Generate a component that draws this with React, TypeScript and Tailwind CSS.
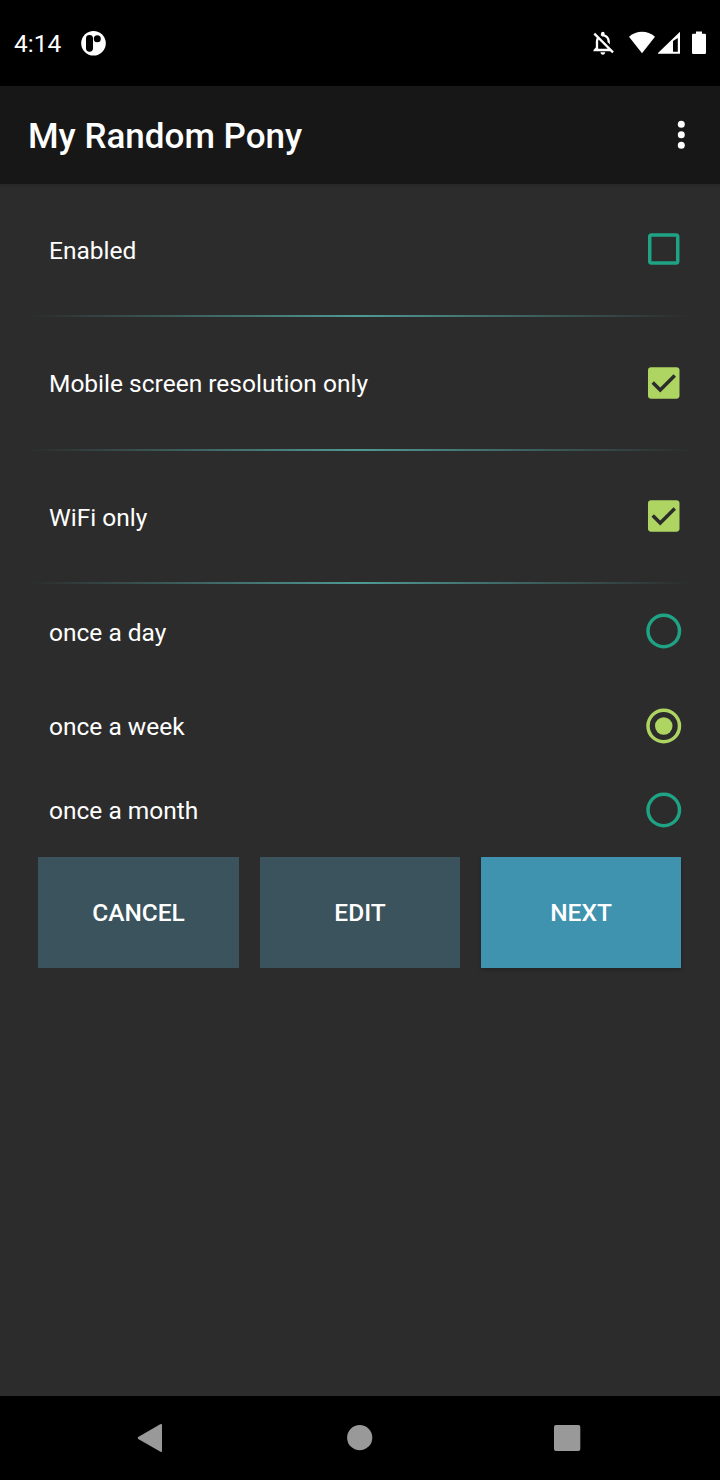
import React from "react";

function StatusBar() {
  return (
    <div className="flex h-[86px] shrink-0 items-center bg-black pl-[14px] text-white">
      <span className="w-[48px] pt-[2px] text-[24.5px] leading-[28px] whitespace-nowrap">4:14</span>
      <svg className="ml-[19px] h-[25px] w-[25px]" viewBox="0 0 25 25">
        <circle cx="12.5" cy="12.3" r="12.3" fill="#fff" />
        <rect x="5" y="4" width="7" height="16.7" rx="3.4" fill="#000" />
        <circle cx="16.3" cy="7.7" r="3.5" fill="#000" />
      </svg>
      <svg className="ml-auto h-[24px] w-[24px]" viewBox="0 0 24 24" fill="#fff">
        <path
          transform="translate(-2.2 -2.1) scale(1.17)"
          d="M12 22c1.1 0 2-.9 2-2h-4c0 1.1.9 2 2 2zm0-15.5c2.49 0 4 2.02 4 4.5v.1l2 2V11c0-3.07-1.63-5.64-4.5-6.32V4c0-.83-.67-1.5-1.5-1.5s-1.5.67-1.5 1.5v.68c-.24.06-.47.15-.69.23l1.64 1.64c.18-.02.36-.05.55-.05zM5.41 3.35L4 4.76l2.81 2.81C6.29 8.57 6 9.74 6 11v5l-2 2v1h14.24l1.74 1.74 1.41-1.41L5.41 3.35zM16 17H8v-6c0-.68.12-1.32.34-1.9L16 16.76V17z"
        />
      </svg>
      <svg className="ml-[14px] h-[24px] w-[26px]" viewBox="0 0 26 24" fill="#fff">
        <path d="M0 5.8C7.5-.9 18.5-.9 26 5.8L13 22.2Z" />
      </svg>
      <svg className="ml-[3px] h-[24px] w-[23px]" viewBox="0 0 23 24">
        <path fillRule="evenodd" d="M-.6 23 22 1V23ZM15 10.4V21H19.8V7.2Z" fill="#fff" transform="translate(0 -.3)" />
      </svg>
      <svg className="mr-[14px] ml-[11px] h-[24px] w-[14px]" viewBox="0 0 14 24" fill="#fff">
        <path d="M4 .5H10V2.7H12.8Q14 2.7 14 3.9V21.8Q14 23 12.8 23H1.2Q0 23 0 21.8V3.9Q0 2.7 1.2 2.7H4Z" />
      </svg>
    </div>
  );
}

function Checkbox({ checked }: { checked: boolean }) {
  return (
    <svg className="mb-[1px] h-[42px] w-[42px]" viewBox="0.15 0 24 24">
      {checked ? (
        <>
          <rect x="3" y="3" width="18" height="18" rx="1.8" fill="#aed561" />
          <path d="M5.7 11.7 10 16 18.3 7.7" fill="none" stroke="#2c2c2c" strokeWidth="2" />
        </>
      ) : (
        <rect x="4" y="4" width="16" height="16" rx="1" fill="none" stroke="#1fa385" strokeWidth="2" />
      )}
    </svg>
  );
}

function Radio({ checked }: { checked: boolean }) {
  return (
    <svg className="mb-[1px] h-[42px] w-[42px]" viewBox="0.15 0 24 24">
      <circle cx="12" cy="12" r="9" fill="none" stroke={checked ? "#aed561" : "#1fa385"} strokeWidth="2" />
      {checked && <circle cx="12" cy="12" r="5" fill="#aed561" />}
    </svg>
  );
}

function Row({ label, className, children }: { label: string; className: string; children: React.ReactNode }) {
  return (
    <div className={"flex items-center justify-between pr-[35px] pl-[49px] " + className}>
      <span className="pt-[1px] text-[24.5px] leading-[29px]">{label}</span>
      {children}
    </div>
  );
}

function Divider() {
  return <div className="mx-[28px] h-[2px] shrink-0 bg-[linear-gradient(to_right,#2c2c2c,#4f9995,#2c2c2c)]" />;
}

function ActionButton({ label, className }: { label: string; className: string }) {
  return (
    <button className={"h-[111px] pt-[2px] text-[24.5px] font-medium " + className}>{label}</button>
  );
}

export default function App() {
  return (
    <div className="flex h-[1480px] w-[720px] flex-col overflow-hidden bg-[#2c2c2c] font-['Roboto',sans-serif] text-white">
      <StatusBar />
      <header className="flex h-[98px] shrink-0 items-center justify-between bg-[#171717] pr-[35px] pl-[28px] shadow-[0_2px_3px_rgba(0,0,0,0.12)]">
        <h1 className="pt-[2px] text-[35px] leading-[41px] font-medium">My Random Pony</h1>
        <svg className="h-[30px] w-[8px]" viewBox="0 0 8 30" fill="#fff">
          <circle cx="4.3" cy="4.3" r="3.5" />
          <circle cx="4.3" cy="14.8" r="3.5" />
          <circle cx="4.3" cy="25.3" r="3.5" />
        </svg>
      </header>
      <main className="flex grow flex-col">
        <Row label="Enabled" className="h-[131px]"><Checkbox checked={false} /></Row>
        <Divider />
        <Row label="Mobile screen resolution only" className="h-[132px]"><Checkbox checked /></Row>
        <Divider />
        <Row label="WiFi only" className="h-[131px]"><Checkbox checked /></Row>
        <Divider />
        <Row label="once a day" className="h-[95px]"><Radio checked={false} /></Row>
        <Row label="once a week" className="h-[94px]"><Radio checked /></Row>
        <Row label="once a month" className="h-[74px]"><Radio checked={false} /></Row>
        <div className="mt-[10px] flex pl-[38px]">
          <ActionButton label="CANCEL" className="w-[201px] bg-[#3b535c]" />
          <ActionButton label="EDIT" className="ml-[21px] w-[200px] bg-[#3b535c]" />
          <ActionButton label="NEXT" className="ml-[21px] w-[200px] bg-[#4093af] shadow-[0_2px_4px_rgba(0,0,0,0.2)]" />
        </div>
      </main>
      <nav className="flex h-[84px] shrink-0 items-center bg-black pl-[137px]">
        <svg className="h-[30px] w-[26px]" viewBox="0 0 26 30" fill="#999">
          <path d="M1.2 14 23.2 1.2Q25 .4 25 2V28Q25 29.5 23.5 28.8L1.2 16Q0 15 1.2 14Z" />
        </svg>
        <svg className="ml-[184px] h-[26px] w-[26px]" viewBox="0 0 26 26" fill="#999">
          <circle cx="12.7" cy="12.7" r="12.6" />
        </svg>
        <svg className="ml-[181px] h-[26px] w-[27px]" viewBox="0 0 27 26" fill="#999">
          <rect width="26.3" height="26" rx="2" />
        </svg>
      </nav>
    </div>
  );
}
